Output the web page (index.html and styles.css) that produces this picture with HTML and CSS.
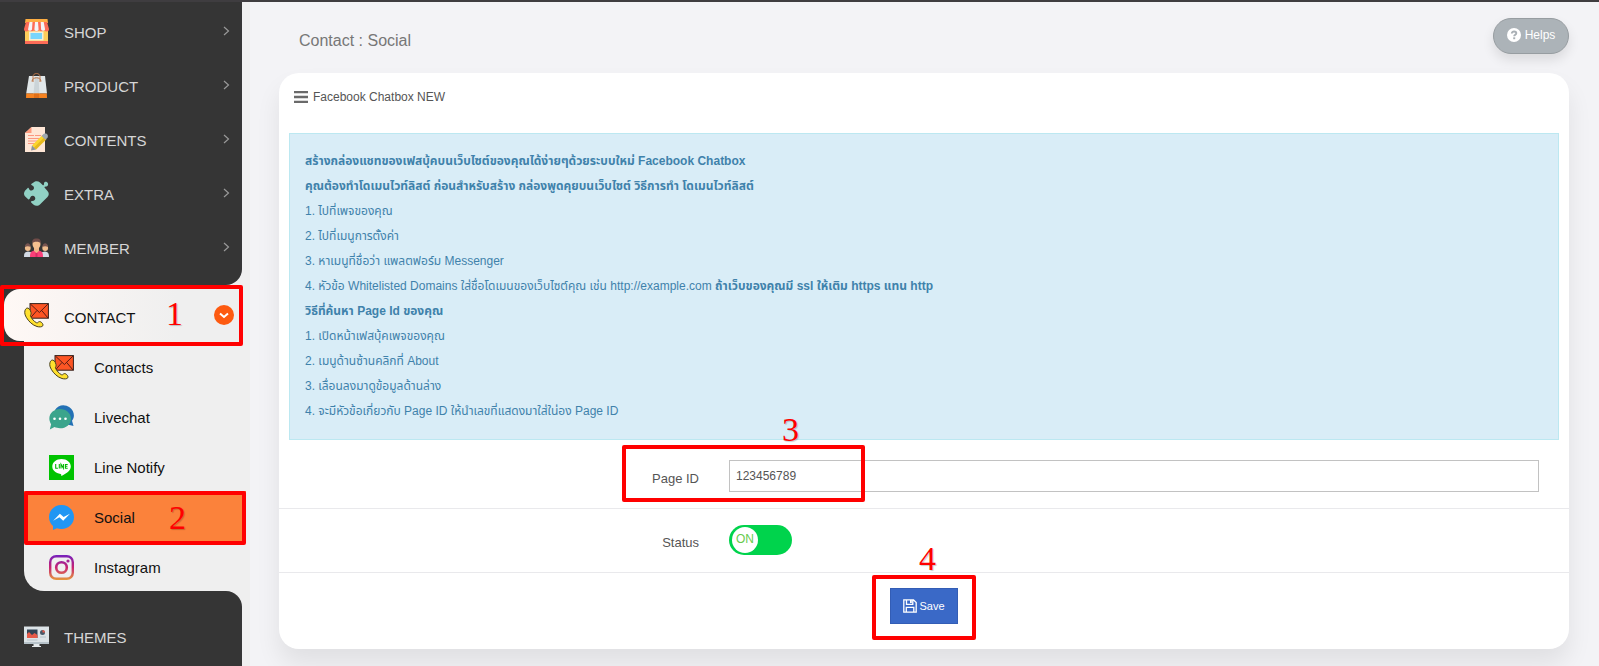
FILE: index.html
```html
<!DOCTYPE html>
<html lang="th">
<head>
<meta charset="utf-8">
<meta name="viewport" content="width=device-width, initial-scale=1">
<title>Contact : Social</title>
<link rel="stylesheet" href="styles.css">
</head>
<body>
<svg class="defs" aria-hidden="true">
  <defs>
    <symbol id="i-chevron" viewBox="0 0 7 10"><path d="M1 1l4.500 4L1 9" fill="none" stroke="#999" stroke-width="1.200"/></symbol>
    <symbol id="i-contact" viewBox="0 0 25 25">
      <rect x="6" y=".6" width="18.400" height="14.600" fill="#fd5524" stroke="#32201c" stroke-width="1"/>
      <path d="M6.400 1l9 8.500L24 1M6.400 15l6.500-7.500M24 15l-6.300-7.500" fill="none" stroke="#5b1d16" stroke-width="1"/>
      <path d="M1.600 6.200C.4 8 .3 11 2.200 14.200c2.400 4.200 6.300 8 10.800 9.300 2.300.7 5 .5 5.800-.7.600-1-.2-2.300-1-3.100-.8-.9-2.300-1.500-3.200-.8-.8.6-1.200 1.300-2.200.8-2.300-1.200-4.700-3.900-5.800-6.400-.5-1.100.3-1.400.5-2.300C7.400 9.300 5.800 5.400 4 5.100c-1-.2-1.900.3-2.400 1.100z" fill="#ffe02e" stroke="#4a4220" stroke-width="1"/>
    </symbol>
  </defs>
</svg>
<div class="topbar"></div>
<div class="layout">
  <aside class="sidebar">
    <nav>
      <ul class="menu menu-top">
        <li><a class="menu-item" href="#">
          <svg class="icon" viewBox="0 0 25 25"><path fill="#fece5b" d="M1 9h23v14H1z"/><path fill="#feae43" d="M1.500 0h22L24 4H1z"/><path fill="#fd6c57" d="M1 22h23v3H1zM2 3h21l2 7a2.500 2.500 0 0 1-5 0 2.500 2.500 0 0 1-5 0 2.500 2.500 0 0 1-5 0 2.500 2.500 0 0 1-5 0 2.500 2.500 0 0 1-5 0z"/><path fill="#f4f4f6" d="M5.500 3h3L8 10.500a2.200 2.200 0 0 1-4 0zM11 3h3l.6 7.500a2.200 2.200 0 0 1-4.200 0zM16.700 3h3l1.400 7.500a2.200 2.200 0 0 1-4 0z"/><path fill="#f5efd7" d="M5 12.500h14.500v9H5z"/><path fill="#78d5fb" d="M6.500 14h11.500v6H6.500z"/></svg>
          <span class="menu-label">SHOP</span><svg class="chevron"><use href="#i-chevron"/></svg></a></li>
        <li><a class="menu-item" href="#">
          <svg class="icon" viewBox="0 0 25 25"><path fill="#e1e7e9" d="M5 3h16l2 17.500H2.200z"/><path fill="#cbd4d8" d="M11 4h3.500l1 17h-6z"/><path fill="#f58220" d="M2.200 20.500h20.600l.2 4.500H2z"/><path fill="#df6f19" d="M10 20.500h5V25h-5z"/><path d="M9 9V3.500c0-4 7-4 7 0V9M8 8.500c0-5 9-5 9 0" fill="none" stroke="#bd7648" stroke-width="1"/></svg>
          <span class="menu-label">PRODUCT</span><svg class="chevron"><use href="#i-chevron"/></svg></a></li>
        <li><a class="menu-item" href="#">
          <svg class="icon" viewBox="0 0 25 25"><path fill="#fee6d6" d="M7.500 0H21v25H1V6z"/><path fill="#fd9a7d" d="M7.500 0v6H1z"/><path d="M4 8.500h6m1 0h6M4 11.500h14M4 14h10M4 16.500h8" stroke="#fb8c75" stroke-width=".9"/><path fill="#fbd52f" d="M18.300 8.200l4 4L12 22.500 8 18.500z"/><path fill="#e6b81e" d="M20.300 10.200l2 2L12 22.500l-2-2z"/><path fill="#8b949c" d="M8 18.500l4 4-5 .9z"/><path fill="#9fa7af" d="M17.500 9l2-2c2.800-1.500 5.400 1 4 3.700l-2 2z"/></svg>
          <span class="menu-label">CONTENTS</span><svg class="chevron"><use href="#i-chevron"/></svg></a></li>
        <li><a class="menu-item" href="#">
          <svg class="icon" viewBox="0 0 25 25"><path fill="#91d1c4" d="M11 .6c1.700-.8 3.500-.4 5 .8l2.700 2.700c.7.600 1.300-.2 1.200-1C19.800.7 21.500.300 22.800.9 24.700 1.900 24.500 5 22.300 5.500c-1 .2-2.300.1-1.600 1.200l2.800 3.200c1.700 2 1.700 4 0 6l-7.300 7.300c-2 1.900-4.600 2.100-6.900.3L7.200 21.400c-1.400-1.500 2.200-1 3.500-2.400 1.200-1.400.5-3.900-1.800-4.200-3-.3-2.500 4-4.500 3.700L1.200 15.400c-1.700-1.900-1.500-4 0-5.900l2.300-2.300c1.300-1.100 1.300.8 2 1.500 1.500 1.600 4.400.8 4.500-1.600.1-2.100-1.600-2.400-2.500-3-.6-.5-.3-.9.100-1.300z"/></svg>
          <span class="menu-label">EXTRA</span><svg class="chevron"><use href="#i-chevron"/></svg></a></li>
        <li><a class="menu-item" href="#">
          <svg class="icon" viewBox="0 0 25 25"><path fill="#d3dae5" d="M0 22c0-4 1-5 4-5.500l4 1V22zM25 22c0-4-1-5-4-5.500l-4 1V22z"/><circle cx="3.800" cy="13" r="2.900" fill="#f0bd8d"/><circle cx="21.200" cy="13" r="2.900" fill="#f0bd8d"/><path fill="#785550" d="M1 12c0-5 5.500-5 5.600 0-1.800-1-4-1-5.600 0zM18.400 12c0-5 5.500-5 5.600 0-1.800-1-4-1-5.600 0z"/><path fill="#f93f78" d="M6 22c0-5 1-6 6.500-7 5.500 1 6.500 2 6.500 7z"/><path fill="#d42d63" d="M11.500 18h2v4h-2z"/><path fill="#efb687" d="M10 12h5v4l-2.500 2L10 16z"/><ellipse cx="12.500" cy="9" rx="4" ry="5" fill="#f5c08f"/><path fill="#704c48" d="M8.200 8.500C8 5 9 3.500 12.500 3.500S17 5 16.800 8.500c-1-2.500-7.500-2.500-8.600 0z"/></svg>
          <span class="menu-label">MEMBER</span><svg class="chevron"><use href="#i-chevron"/></svg></a></li>
      </ul>
      <div class="group">
        <a class="menu-item menu-open" href="#">
          <svg class="icon"><use href="#i-contact"/></svg>
          <span class="menu-label">CONTACT</span>
          <svg class="badge" viewBox="0 0 20 20"><circle cx="10" cy="10" r="10" fill="#fd5a10"/><path d="M6 8.500l4 3.500 4-3.500" fill="none" stroke="#fff" stroke-width="2"/></svg>
        </a>
        <div class="mark mark-1"><span>1</span></div>
        <ul class="menu submenu">
          <li><a class="sub-item" href="#"><svg class="icon"><use href="#i-contact"/></svg>Contacts</a></li>
          <li><a class="sub-item" href="#"><svg class="icon" viewBox="0 0 25 25"><path fill="#2371b5" d="M6 5C9-.5 16-1 20.500 2.200c5 3.800 5.600 9.800 2.500 13.500l1.500 5.300-6-1.500z"/><path fill="#3ba58c" d="M11 4c6 0 11 4 11 9.700s-5 9.600-11 9.600c-2 0-4-.5-5.500-1.200L.8 24.500l1.300-5.300C-2.500 12 2.500 4 11 4z"/><g fill="#fff"><circle cx="5.500" cy="13.700" r="1.300"/><circle cx="11" cy="13.700" r="1.300"/><circle cx="16.500" cy="13.700" r="1.300"/></g></svg>Livechat</a></li>
          <li><a class="sub-item" href="#"><svg class="icon" viewBox="0 0 25 25"><path fill="#00c300" d="M0 0h25v25H0z"/><path fill="#fff" d="M12.500 4c5.300 0 9.300 3.200 9.300 7.500 0 4.200-4.600 7-9.300 9.500-.6-.3.400-1.800-.9-2.100C6.700 18.200 3.300 15.300 3.300 11.500 3.300 7.200 7.300 4 12.500 4z"/><path d="M6.700 9v4.300h2.200M10.300 9v4.500M12 13.500V9.300l2.400 3.900V9M18.700 9.500h-2.300v3.700h2.300m-2.300-1.900h2" fill="none" stroke="#00b800" stroke-width="1.100"/></svg>Line Notify</a></li>
          <li class="active"><a class="sub-item" href="#"><svg class="icon" viewBox="0 0 25 25"><path fill="#2196f3" d="M12.500 0C19.500 0 25 5.200 25 12s-5.500 12-12.500 12c-1.700 0-3.300-.3-4.600-.8L4 25v-3.900C1.500 18.900 0 15.700 0 12 0 5.200 5.500 0 12.500 0z"/><path fill="#fff" d="M4.200 15.700l6.700-7 3.700 3.300 6.300-3.300-6.700 7-3.800-3.400z"/></svg>Social</a><div class="mark mark-2"><span>2</span></div></li>
          <li><a class="sub-item" href="#"><svg class="icon" viewBox="0 0 25 25"><defs><linearGradient id="ig" x1="0" y1="0" x2="0" y2="25" gradientUnits="userSpaceOnUse"><stop offset="0" stop-color="#7520bd"/><stop offset=".5" stop-color="#c82372"/><stop offset="1" stop-color="#e59a3c"/></linearGradient></defs><rect x="1.200" y="1.200" width="22.600" height="22.600" rx="6" fill="none" stroke="url(#ig)" stroke-width="2.400"/><circle cx="12.500" cy="12.500" r="5.300" fill="none" stroke="url(#ig)" stroke-width="2.600"/><circle cx="19" cy="6" r="1.600" fill="#a62294"/></svg>Instagram</a></li>
        </ul>
      </div>
      <ul class="menu menu-bottom">
        <li><a class="menu-item" href="#">
          <svg class="icon" viewBox="0 0 25 25"><path fill="#dce3e7" d="M0 2.500h25V19H0z"/><path fill="#b6c2c9" d="M0 18h25v2H0z"/><path fill="#e4e9ec" d="M9.500 20h6v2h-6zM8 22h9v1H8z"/><path fill="#304354" d="M3 5.500h10.500V14H3z"/><path fill="#e55a49" d="M3 10l2-2 3 3 2.500-2 3 2v3H3z"/><circle cx="18.500" cy="8.500" r="2.500" fill="#46596a"/><path fill="#e55a49" d="M18.500 6a2.500 2.500 0 0 1 2.500 2.500h-2.500z"/><path d="M16 13h6M3 16h10.500" stroke="#b6c2c9"/></svg>
          <span class="menu-label">THEMES</span></a></li>
      </ul>
    </nav>
  </aside>
  <main class="main">
    <header class="page-head">
      <h1>Contact : Social</h1>
      <button class="helps" type="button"><svg viewBox="0 0 14 14"><circle cx="7" cy="7" r="7" fill="#fff"/><path d="M4.800 5.400C4.800 2.800 9.300 2.900 9.300 5.300c0 1.500-2.100 1.500-2.100 3" fill="none" stroke="#a9b0b5" stroke-width="1.900"/><path d="M6.200 9.300h2v1.900h-2z" fill="#a9b0b5"/></svg>Helps</button>
    </header>
    <section class="card">
      <h2><svg viewBox="0 0 14 12"><path d="M0 1h14M0 6h14M0 11h14" stroke="#6a6a6a" stroke-width="2.400"/></svg>Facebook Chatbox NEW</h2>
      <div class="alert">
        <p><strong>สร้างกล่องแชทของเฟสบุ้คบนเว็บไซต์ของคุณได้ง่ายๆด้วยระบบใหม่ Facebook Chatbox</strong></p>
        <p><strong>คุณต้องทำโดเมนไวท์ลิสต์ ก่อนสำหรับสร้าง กล่องพูดคุยบนเว็บไซต์ วิธีการทำ โดเมนไวท์ลิสต์</strong></p>
        <p>1. ไปที่เพจของคุณ</p>
        <p>2. ไปที่เมนูการตั้งค่า</p>
        <p>3. หาเมนูที่ชื่อว่า แพลตฟอร์ม Messenger</p>
        <p>4. หัวข้อ Whitelisted Domains ใส่ชื่อโดเมนของเว็บไซต์คุณ เช่น http://example.com <strong>ถ้าเว็บของคุณมี ssl ให้เติม https แทน http</strong></p>
        <p><strong>วิธีที่ค้นหา Page Id ของคุณ</strong></p>
        <p>1. เปิดหน้าเฟสบุ้คเพจของคุณ</p>
        <p>2. เมนูด้านซ้านคลิกที่ About</p>
        <p>3. เลื่อนลงมาดูข้อมูลด้านล่าง</p>
        <p>4. จะมีหัวข้อเกี่ยวกับ Page ID ให้นำเลขที่แสดงมาใส่ใน่อง Page ID</p>
      </div>
      <form>
        <div class="row row-id">
          <label for="page-id">Page ID</label>
          <div class="field"><input class="text" id="page-id" type="text" value="123456789"><div class="mark mark-3"><span>3</span></div></div>
        </div>
        <div class="row row-status">
          <label for="status">Status</label>
          <div class="field"><span class="switch"><input id="status" type="checkbox" checked><span class="knob">ON</span></span></div>
        </div>
        <div class="actions">
          <div class="save-wrap">
            <button class="save" type="button"><svg viewBox="0 0 14 14"><path d="M.8.8h9.700l2.700 2.700v9.700H.8zM3.500.8v4.500h6.300V.8M3.300 13V8.300h7.500V13" fill="none" stroke="#fff" stroke-width="1.300"/><path d="M7 1h1.800v3H7z" fill="#fff"/></svg>Save</button>
            <div class="mark mark-4"><span>4</span></div>
          </div>
        </div>
      </form>
    </section>
  </main>
</div>
</body>
</html>
```
FILE: styles.css
```css
* { box-sizing: border-box; }
body {
  margin: 0;
  min-height: 100vh;
  display: flex;
  flex-direction: column;
  background: #f3f3f6;
  color: #555;
  font: 12px/25px "Liberation Sans", Arial, "Noto Sans Thai", sans-serif;
}
.defs { position: absolute; width: 0; height: 0; }
.topbar { height: 2px; background: #3f3d40; }
.layout { display: flex; flex: 1; }

.sidebar {
  width: 250px;
  flex: none;
  display: flex;
  background: #efefef;
}
.sidebar nav { flex: 1; display: flex; flex-direction: column; }
.menu { list-style: none; margin: 0; padding: 0; }
.menu-top, .menu-bottom { margin-right: 8px; background: #353535; }
.menu-top { padding: 2px 0 11px; border-bottom-right-radius: 16px; }
.menu-bottom { flex: 1; padding-top: 18px; border-top-right-radius: 16px; }
.menu-item {
  display: flex;
  align-items: center;
  gap: 15px;
  height: 54px;
  padding: 0 12px 0 24px;
  color: #d6d6d6;
  font-size: 15px;
  text-decoration: none;
}
.icon { width: 25px; height: 25px; flex: none; }
.menu-label { flex: 1; padding-top: 2px; }
.chevron { width: 7px; height: 10px; }
.group {
  position: relative;
  padding-top: 4px;
  background: linear-gradient(to right, #353535 60px, #efefef 60px);
}
.menu-open {
  height: 52px;
  margin-left: 4px;
  padding: 0 16px 0 20px;
  border-radius: 16px 0 0 16px;
  background: linear-gradient(to right, #fff8f5, #efefef 70%);
  color: #111;
}
.menu-open .menu-label { padding-top: 4px; }
.badge { width: 20px; height: 20px; }
.submenu {
  margin-left: 24px;
  background: #efefef;
  border-bottom-left-radius: 20px;
}
.submenu li { position: relative; height: 50px; }
.submenu .active { margin-right: 4px; background: #fb823b; }
.sub-item {
  display: flex;
  align-items: center;
  gap: 20px;
  height: 52px;
  padding-left: 25px;
  color: #111;
  font-size: 15px;
  text-decoration: none;
}

.main { flex: 1; min-width: 0; padding: 16px 30px 17px 29px; }
.page-head {
  display: flex;
  justify-content: space-between;
  align-items: center;
  height: 36px;
  margin-bottom: 19px;
  padding-left: 20px;
}
h1 { margin: 0; padding-top: 8px; color: #777; font-size: 16px; font-weight: 400; }
.helps, .save {
  display: flex;
  align-items: center;
  justify-content: center;
  height: 36px;
  color: #fff;
  font-family: inherit;
}
.helps {
  width: 76px;
  gap: 4px;
  padding: 0 0 2px;
  border: 1px solid #979da1;
  border-radius: 18px;
  background: #acb3b8;
  box-shadow: 0 6px 12px rgba(0, 0, 0, .1);
  font-size: 12px;
}
.helps svg, .save svg { width: 14px; height: 14px; }
.card {
  border-radius: 20px;
  background: #fff;
  box-shadow: 0 15px 25px rgba(0, 0, 0, .08);
}
h2 {
  display: flex;
  align-items: center;
  gap: 5px;
  height: 60px;
  margin: 0;
  padding: 0 15px 12px;
  color: #555;
  font-size: 12px;
  font-weight: 400;
}
h2 svg { width: 14px; height: 12px; }
.alert {
  margin: 0 10px;
  padding: 15px;
  border: 1px solid #bce8f1;
  background: #d9edf7;
  color: #3f82ab;
}
.alert p { margin: 0; }
.row {
  display: grid;
  grid-template-columns: 1fr 2fr;
  padding: 0 15px;
  border-bottom: 1px solid #e9e9ec;
}
.row label { padding: 6px 15px 0; text-align: right; font-size: 13px; }
.field { position: relative; margin: 0 15px; }
.row-id { padding-top: 20px; padding-bottom: 16px; }
.row-status { padding-top: 16px; padding-bottom: 17px; }
.row-status label { padding-top: 5px; }
.text {
  display: block;
  width: 100%;
  height: 32px;
  padding: 0 6px;
  border: 1px solid #c2c2c2;
  background: #fff;
  color: #555;
  font: 12px "Liberation Sans", Arial, sans-serif;
}
.switch { position: relative; display: block; width: 63px; height: 30px; }
.switch input {
  appearance: none;
  display: block;
  width: 63px;
  height: 30px;
  margin: 0;
  border-radius: 15px;
  background: #00d34c;
}
.knob {
  position: absolute;
  top: 2px;
  left: 3px;
  width: 26px;
  height: 26px;
  border-radius: 50%;
  background: #fff;
  color: #69cb4d;
  text-align: center;
  pointer-events: none;
}
.actions { display: flex; justify-content: center; padding: 15px 0 25px; }
.save-wrap { position: relative; }
.save {
  width: 68px;
  gap: 2px;
  padding: 0;
  border: 1px solid #335db5;
  background: #3a69c7;
  font-size: 11px;
  font-weight: 500;
}

/* Numbered step markers laid over the page */
.mark {
  position: absolute;
  border: 4px solid #f00;
  border-radius: 2px;
  color: #f00;
  font: 34px/36px "Liberation Serif", "Times New Roman", serif;
  pointer-events: none;
  z-index: 2;
}
.mark span { position: absolute; text-shadow: 1px 1px 1px rgba(0, 0, 0, .2); }
.mark-1 { top: 0; left: 0; width: 243px; height: 61px; }
.mark-1 span { left: 162px; top: 7px; }
.mark-2 { top: 0; left: 0; width: 222px; height: 54px; }
.mark-2 span { left: 141px; top: 5px; }
.mark-3 { top: -15px; left: -107px; width: 243px; height: 57px; }
.mark-3 span { left: 156px; top: -37px; }
.mark-4 { top: -13px; left: -18px; width: 104px; height: 65px; }
.mark-4 span { left: 43px; top: -38px; }
```
